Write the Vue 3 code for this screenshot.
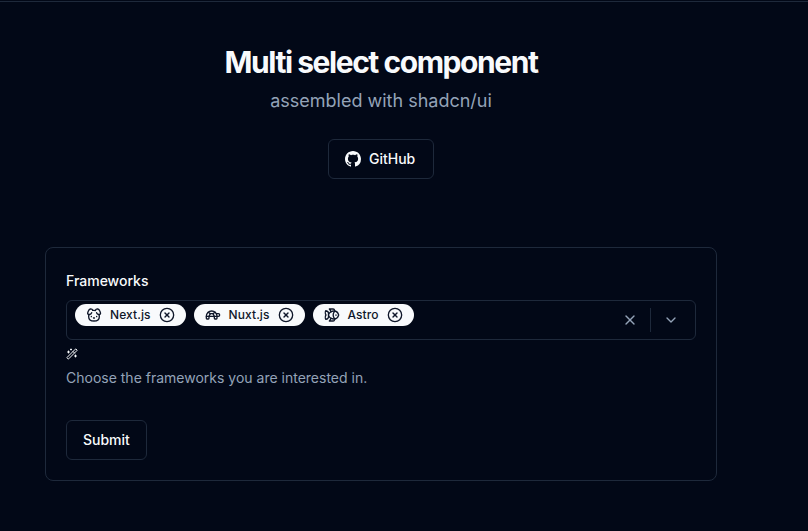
<script setup>
const frameworks = [
  {
    name: "Next.js",
    icon: [
      "M10 5.172C10 3.782 8.423 2.679 6.5 3c-2.823.47-4.113 6.006-4 7 .08.703 1.725 1.722 3.656 1 1.261-.472 1.96-1.45 2.344-2.5",
      "M14.267 5.172c0-1.39 1.577-2.493 3.5-2.172 2.823.47 4.113 6.006 4 7-.08.703-1.725 1.722-3.656 1-1.261-.472-1.855-1.45-2.239-2.5",
      "M8 14v.5",
      "M16 14v.5",
      "M11.25 16.25h1.5L12 17l-.75-.75Z",
      "M4.42 11.247A13.152 13.152 0 0 0 4 14.556C4 18.728 7.582 21 12 21s8-2.272 8-6.444c0-1.061-.162-2.2-.493-3.309m-9.243-6.082A8.801 8.801 0 0 1 12 5c.78 0 1.5.108 2.161.306",
    ],
  },
  {
    name: "Nuxt.js",
    icon: [
      "m12 10 2 4v3a1 1 0 0 0 1 1h2a1 1 0 0 0 1-1v-3a8 8 0 1 0-16 0v3a1 1 0 0 0 1 1h2a1 1 0 0 0 1-1v-3l2-4h4Z",
      "M4.82 7.9 8 10",
      "M15.18 7.9 12 10",
      "M16.93 10H20a2 2 0 0 1 0 4H2",
    ],
  },
  {
    name: "Astro",
    icon: [
      "M6.5 12c.94-3.46 4.94-6 8.5-6 3.56 0 6.06 2.54 7 6-.94 3.47-3.44 6-7 6s-7.56-2.53-8.5-6Z",
      "M18 12v.5",
      "M16 17.93a9.77 9.77 0 0 1 0-11.86",
      "M7 10.67C7 8 5.58 5.97 2.73 5.5c-1 1.5-1 5 .23 6.5-1.24 1.5-1.24 5-.23 6.5C5.58 18.03 7 16 7 13.33",
      "M10.46 7.26C10.2 5.88 9.17 4.24 8 3h5.8a2 2 0 0 1 1.98 1.67l.23 1.4",
      "m16.01 17.93-.23 1.4A2 2 0 0 1 13.8 21H8c1.17-1.24 2.2-2.88 2.46-4.26",
    ],
  },
];

const wand = [
  "m21.64 3.64-1.28-1.28a1.21 1.21 0 0 0-1.72 0L2.36 18.64a1.21 1.21 0 0 0 0 1.72l1.28 1.28a1.2 1.2 0 0 0 1.72 0L21.64 5.36a1.2 1.2 0 0 0 0-1.72",
  "m14 7 3 3",
  "M5 6v4",
  "M19 14v4",
  "M10 2v2",
  "M7 8H3",
  "M21 16h-4",
  "M11 3H9",
];
</script>

<template>
  <div class="page">
    <main class="container">
      <h1 class="title">Multi select component</h1>
      <p class="subtitle">assembled with shadcn/ui</p>
      <button class="btn github">
        <svg class="github-icon" viewBox="0 0 16 16" fill="currentColor">
          <path d="M8 0C3.58 0 0 3.58 0 8c0 3.54 2.29 6.53 5.47 7.59.4.07.55-.17.55-.38 0-.19-.01-.82-.01-1.49-2.01.37-2.53-.49-2.69-.94-.09-.23-.48-.94-.82-1.13-.28-.15-.68-.52-.01-.53.63-.01 1.08.58 1.23.82.72 1.21 1.87.87 2.33.66.07-.52.28-.87.51-1.07-1.78-.2-3.64-.89-3.64-3.95 0-.87.31-1.59.82-2.15-.08-.2-.36-1.02.08-2.12 0 0 .67-.21 2.2.82.64-.18 1.32-.27 2-.27.68 0 1.36.09 2 .27 1.53-1.04 2.2-.82 2.2-.82.44 1.1.16 1.92.08 2.12.51.56.82 1.27.82 2.15 0 3.07-1.87 3.75-3.65 3.95.29.25.54.73.54 1.48 0 1.07-.01 1.93-.01 2.2 0 .21.15.46.55.38A8.013 8.013 0 0016 8c0-4.42-3.58-8-8-8z" />
        </svg>
        GitHub
      </button>

      <form class="card" @submit.prevent>
        <label class="label">Frameworks</label>
        <div class="select">
          <div class="badges">
            <span v-for="fw in frameworks" :key="fw.name" class="badge">
              <svg class="badge-icon" viewBox="0 0 24 24">
                <path v-for="d in fw.icon" :key="d" :d="d" />
              </svg>
              {{ fw.name }}
              <svg class="badge-close" viewBox="0 0 24 24">
                <circle cx="12" cy="12" r="10" />
                <path d="m15 9-6 6" />
                <path d="m9 9 6 6" />
              </svg>
            </span>
          </div>
          <div class="actions">
            <svg class="action-icon" viewBox="0 0 24 24">
              <path d="M18 6 6 18" />
              <path d="m6 6 12 12" />
            </svg>
            <span class="divider"></span>
            <svg class="action-icon" viewBox="0 0 24 24">
              <path d="m6 9 6 6 6-6" />
            </svg>
          </div>
        </div>
        <svg class="wand" viewBox="0 0 24 24">
          <path v-for="d in wand" :key="d" :d="d" />
        </svg>
        <p class="hint">Choose the frameworks you are interested in.</p>
        <button class="btn submit" type="submit">Submit</button>
      </form>
    </main>
  </div>
</template>

<style>
html,
body {
  margin: 0;
  background: #020817;
}
</style>

<style scoped>
.page {
  min-height: 530px;
  box-sizing: border-box;
  border-top: 1px solid #1e293b;
  margin-top: 1px;
  background: #020817;
  color: #f8fafc;
  font-family: Inter, "Liberation Sans", sans-serif;
  padding-right: 46px;
}

.container {
  display: flex;
  flex-direction: column;
  align-items: center;
  padding-top: 40px;
}

.title {
  margin: 0;
  font-size: 30px;
  line-height: 40px;
  font-weight: 700;
  letter-spacing: -1.45px;
}

.subtitle {
  margin: 5px 0 0;
  font-size: 18px;
  line-height: 28px;
  color: #94a3b8;
}

.btn {
  display: inline-flex;
  align-items: center;
  justify-content: center;
  box-sizing: border-box;
  height: 40px;
  border: 1px solid #1e293b;
  border-radius: 6px;
  background: #020817;
  color: #f8fafc;
  font-family: inherit;
  font-size: 14px;
  font-weight: 500;
  padding: 0 16px 1px;
}

.github {
  margin-top: 24px;
  width: 106px;
  gap: 8px;
  justify-content: flex-start;
}

.github-icon {
  width: 16px;
  height: 16px;
}

.card {
  align-self: flex-start;
  margin: 68px 0 0 45px;
  box-sizing: border-box;
  width: 672px;
  height: 234px;
  border: 1px solid #1e293b;
  border-radius: 8px;
  padding: 21px 20px 20px;
  display: flex;
  flex-direction: column;
  align-items: flex-start;
}

.label {
  font-size: 14px;
  line-height: 24px;
  font-weight: 500;
}

.select {
  margin-top: 7px;
  box-sizing: border-box;
  width: 630px;
  height: 40px;
  border: 1px solid #1e293b;
  border-radius: 6px;
  padding: 2px 16px 0 8px;
  display: flex;
  justify-content: space-between;
}

.badges {
  display: flex;
  gap: 8px;
  height: 22px;
  margin-top: 1px;
}

.badge {
  display: inline-flex;
  align-items: center;
  height: 22px;
  box-sizing: border-box;
  border-radius: 999px;
  background: #f8fafc;
  color: #0f172a;
  font-size: 12px;
  font-weight: 500;
  letter-spacing: 0.08px;
  padding: 0 11px 1px;
}

.badge-icon {
  width: 16px;
  height: 16px;
  margin-right: 8px;
  fill: none;
  stroke: currentColor;
  stroke-width: 2;
  stroke-linecap: round;
  stroke-linejoin: round;
}

.badge-close {
  width: 16px;
  height: 16px;
  margin-left: 8px;
  fill: none;
  stroke: currentColor;
  stroke-width: 2;
  stroke-linecap: round;
  stroke-linejoin: round;
}

.actions {
  display: flex;
  align-items: center;
  gap: 12px;
  height: 38px;
  margin-top: -2px;
}

.action-icon {
  width: 16px;
  height: 16px;
  fill: none;
  stroke: #94a3b8;
  stroke-width: 2;
  stroke-linecap: round;
  stroke-linejoin: round;
}

.divider {
  width: 1px;
  height: 24px;
  background: #1e293b;
}

.wand {
  margin-top: 8px;
  width: 12px;
  height: 12px;
  fill: none;
  stroke: #f8fafc;
  stroke-width: 2;
  stroke-linecap: round;
  stroke-linejoin: round;
}

.hint {
  margin: 8px 0 0;
  font-size: 14px;
  line-height: 20px;
  color: #94a3b8;
}

.submit {
  margin-top: 32px;
}
</style>
